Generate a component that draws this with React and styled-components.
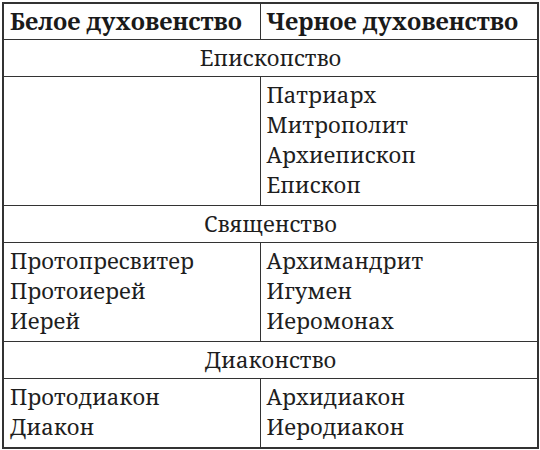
import React from "react";
import styled, { createGlobalStyle } from "styled-components";

const GlobalStyle = createGlobalStyle`
  html, body {
    margin: 0;
    padding: 0;
    background: #ffffff;
  }
`;

const Page = styled.div`
  padding: 2px 0 0 2px;
  width: 540px;
  height: 450px;
  box-sizing: border-box;
  font-family: "Noto Serif", serif;
`;

const Table = styled.table`
  border-collapse: collapse;
  width: 535px;
  table-layout: fixed;
  border: 2px solid #333333;
  font-family: "Noto Serif", serif;
`;

const Col = styled.col`
  width: ${({ $w }) => $w}px;
`;

const HeadCell = styled.th`
  border: 1.5px solid #333333;
  padding: 2px 6px 3px;
  font-family: "Noto Serif", serif;
  font-size: 23.5px;
  line-height: 30px;
  font-weight: 700;
  text-align: left;
  color: #1a1a1a;
  white-space: nowrap;
`;

const SectionCell = styled.td`
  border: 1.5px solid #333333;
  padding: 2px 6px 4px;
  font-family: "Noto Serif", serif;
  font-size: 22px;
  line-height: 30px;
  text-align: center;
  color: #1e1e1e;
`;

const Cell = styled.td`
  border: 1.5px solid #333333;
  padding: 2px 6px 6px;
  font-family: "Noto Serif", serif;
  font-size: 22px;
  line-height: 30px;
  vertical-align: top;
  white-space: nowrap;
  color: #1e1e1e;
`;

const Line = styled.div`
  font-family: "Noto Serif", serif;
`;

const sections = [
  {
    title: "Епископство",
    white: [],
    black: ["Патриарх", "Митрополит", "Архиепископ", "Епископ"],
  },
  {
    title: "Священство",
    white: ["Протопресвитер", "Протоиерей", "Иерей"],
    black: ["Архимандрит", "Игумен", "Иеромонах"],
  },
  {
    title: "Диаконство",
    white: ["Протодиакон", "Диакон"],
    black: ["Архидиакон", "Иеродиакон"],
  },
];

function App() {
  return (
    <Page>
      <GlobalStyle />
      <Table>
        <colgroup>
          <Col $w={257} />
          <Col $w={278} />
        </colgroup>
        <thead>
          <tr>
            <HeadCell>Белое духовенство</HeadCell>
            <HeadCell>Черное духовенство</HeadCell>
          </tr>
        </thead>
        <tbody>
          {sections.map((s) => (
            <React.Fragment key={s.title}>
              <tr>
                <SectionCell colSpan={2}>{s.title}</SectionCell>
              </tr>
              <tr>
                <Cell>
                  {s.white.map((t) => (
                    <Line key={t}>{t}</Line>
                  ))}
                </Cell>
                <Cell>
                  {s.black.map((t) => (
                    <Line key={t}>{t}</Line>
                  ))}
                </Cell>
              </tr>
            </React.Fragment>
          ))}
        </tbody>
      </Table>
    </Page>
  );
}

export default App;
